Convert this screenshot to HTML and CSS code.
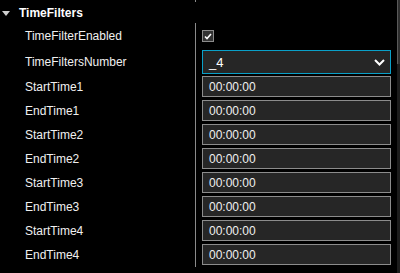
FILE: index.html
```html
<!DOCTYPE html>
<html lang="en">
<head>
  <meta charset="UTF-8" />
  <title>TimeFilters</title>
  <link rel="stylesheet" href="styles.css">
</head>
<body>
  <div class="panel">
    <div class="grid">
      <div class="top-strip">
        <div class="label-cell"></div>
        <div class="value-cell"></div>
      </div>

      <div class="category">
        <span class="caret"></span>
        <span class="category-name">TimeFilters</span>
      </div>

      <div class="prop tall">
        <div class="label-cell">TimeFilterEnabled</div>
        <div class="value-cell">
          <span class="checkbox">
            <svg width="8" height="7" viewBox="0 0 8 7">
              <path d="M1 3.5 L3 5.5 L7 1" fill="none" stroke="#fff" stroke-width="1.6"/>
            </svg>
          </span>
        </div>
      </div>

      <div class="prop tall">
        <div class="label-cell">TimeFiltersNumber</div>
        <div class="value-cell">
          <div class="select">
            <span>_4</span>
            <svg width="11" height="7" viewBox="0 0 11 7">
              <path d="M1 1 L5.5 5.5 L10 1" fill="none" stroke="#fff" stroke-width="2"/>
            </svg>
          </div>
        </div>
      </div>

      <div class="prop">
        <div class="label-cell">StartTime1</div>
        <div class="value-cell"><div class="field">00:00:00</div></div>
      </div>
      <div class="prop">
        <div class="label-cell">EndTime1</div>
        <div class="value-cell"><div class="field">00:00:00</div></div>
      </div>
      <div class="prop">
        <div class="label-cell">StartTime2</div>
        <div class="value-cell"><div class="field">00:00:00</div></div>
      </div>
      <div class="prop">
        <div class="label-cell">EndTime2</div>
        <div class="value-cell"><div class="field">00:00:00</div></div>
      </div>
      <div class="prop">
        <div class="label-cell">StartTime3</div>
        <div class="value-cell"><div class="field">00:00:00</div></div>
      </div>
      <div class="prop">
        <div class="label-cell">EndTime3</div>
        <div class="value-cell"><div class="field">00:00:00</div></div>
      </div>
      <div class="prop">
        <div class="label-cell">StartTime4</div>
        <div class="value-cell"><div class="field">00:00:00</div></div>
      </div>
      <div class="prop">
        <div class="label-cell">EndTime4</div>
        <div class="value-cell"><div class="field">00:00:00</div></div>
      </div>
    </div>

    <div class="scrollbar">
      <div class="thumb"></div>
    </div>
  </div>
</body>
</html>
```

FILE: styles.css
```css
* {
  margin: 0;
  padding: 0;
  box-sizing: border-box;
}

body {
  background: #000;
  color: #f0f0f0;
  font-family: 'Liberation Sans', Arial, sans-serif;
  font-size: 12px;
  overflow: hidden;
}

.panel {
  display: flex;
  width: 400px;
  height: 273px;
}

.grid {
  flex: 1;
}

.scrollbar {
  width: 4px;
  background: #1c1c1c;
}

.thumb {
  height: 64px;
  background: #2e2e2e;
  border-left: 1px solid #5a5a5a;
}

.top-strip,
.prop {
  display: flex;
}

.top-strip {
  height: 2px;
}

.label-cell {
  width: 196px;
  padding-left: 25px;
  border-right: 1px solid #8a8a8a;
  display: flex;
  align-items: center;
  white-space: nowrap;
}

.value-cell {
  flex: 1;
  padding: 1px 6px 0 6px;
  display: flex;
  align-items: flex-start;
}

.category {
  height: 21px;
  display: flex;
  align-items: center;
  padding-left: 2px;
}

.caret {
  width: 0;
  height: 0;
  border-left: 4px solid transparent;
  border-right: 4px solid transparent;
  border-top: 5px solid #cfcfcf;
  margin-right: 9px;
  margin-top: 1px;
}

.category-name {
  font-weight: bold;
  color: #fff;
}

.prop {
  height: 24px;
}

.prop.tall {
  height: 26px;
}

.prop.tall .value-cell {
  align-items: center;
  padding-top: 0;
}

.checkbox {
  width: 12px;
  height: 12px;
  border: 1px solid #8c8c8c;
  background: #333;
  display: flex;
  align-items: center;
  justify-content: center;
}

.select {
  width: 189px;
  height: 24px;
  border: 1px solid #0aa0c8;
  background: #262626;
  display: flex;
  align-items: center;
  justify-content: space-between;
  padding: 0 5px 0 6px;
  color: #fff;
  font-size: 13px;
}

.field {
  width: 189px;
  height: 21px;
  border: 1px solid #8c8c8c;
  background: #262626;
  padding-left: 6px;
  display: flex;
  align-items: center;
  color: #f0f0f0;
}
```
